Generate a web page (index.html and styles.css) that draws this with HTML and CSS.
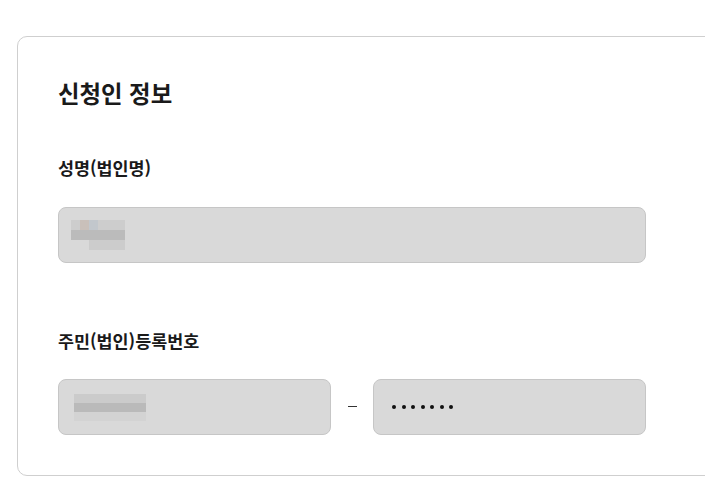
FILE: index.html
```html
<!DOCTYPE html>
<html lang="ko">
<head>
  <meta charset="UTF-8">
  <meta name="viewport" content="width=device-width, initial-scale=1.0">
  <title>신청인 정보</title>
  <link rel="stylesheet" href="styles.css">
</head>
<body>

  <div class="card">
    <h2 class="card-title">신청인 정보</h2>

    <!-- 성명 -->
    <div class="field">
      <label class="field-label">성명(법인명)</label>
      <div class="input-box">
        <div class="mosaic mosaic-name">
          <span></span><span></span><span></span><span></span><span></span><span></span>
          <span></span><span></span><span></span><span></span><span></span><span></span>
          <span></span><span></span><span></span><span></span><span></span><span></span>
        </div>
      </div>
    </div>

    <!-- 주민등록번호 -->
    <div class="field field-second">
      <label class="field-label">주민(법인)등록번호</label>
      <div class="id-row">
        <div class="input-box">
          <div class="mosaic mosaic-id">
            <span></span><span></span><span></span><span></span><span></span><span></span><span></span><span></span>
            <span></span><span></span><span></span><span></span><span></span><span></span><span></span><span></span>
            <span></span><span></span><span></span><span></span><span></span><span></span><span></span><span></span>
          </div>
        </div>
        <div class="dash"><span></span></div>
        <div class="input-box">
          <div class="dots">
            <span></span><span></span><span></span><span></span><span></span><span></span><span></span>
          </div>
        </div>
      </div>
    </div>
  </div>

</body>
</html>
```

FILE: styles.css
```css
body {
  font-family: "Noto Sans CJK KR", "Noto Sans", sans-serif;
  background-color: #ffffff;
  color: #222;
  margin: 0;
  padding: 36px 0 0 17px;
  overflow: hidden;
}

.card {
  width: 720px;
  border: 1px solid #cfcfcf;
  border-radius: 10px;
  padding: 40px 40px 40px 40px;
  box-sizing: border-box;
}

.card-title {
  margin: 0;
  font-size: 23.4px;
  line-height: 33px;
  font-weight: 700;
  color: #1a1a1a;
}

.field {
  width: 588px;
  margin-top: 46px;
}

.field-second {
  margin-top: 66px;
}

.field-label {
  display: block;
  font-size: 17.4px;
  line-height: 24px;
  font-weight: 700;
  color: #1a1a1a;
  margin-bottom: 27px;
}

.field-second .field-label {
  margin-bottom: 26px;
}

.input-box {
  height: 56px;
  background-color: #d9d9d9;
  border: 1px solid #c6c6c6;
  border-radius: 8px;
  box-sizing: border-box;
  display: flex;
  align-items: center;
  padding-left: 12px;
}

.id-row {
  display: grid;
  grid-template-columns: 1fr 42px 1fr;
}

.dash {
  display: flex;
  align-items: center;
  justify-content: center;
  padding-bottom: 1px;
}

.dash span {
  width: 9px;
  height: 1px;
  background-color: #333;
}

/* blurred placeholder values */
.mosaic {
  display: grid;
  grid-template-columns: repeat(6, 9px);
  grid-auto-rows: 10px;
}

.mosaic span {
  background-color: #cdcdcd;
}

.mosaic-name span:nth-child(n+7):nth-child(-n+12) {
  background-color: #bbbbbb;
}

.mosaic-name span:nth-child(2) { background-color: #c9c0ba; }
.mosaic-name span:nth-child(3) { background-color: #c2c7cc; }
.mosaic-name span:nth-child(8) { background-color: #b5aea9; }
.mosaic-name span:nth-child(9) { background-color: #b1b6bc; }
.mosaic-name span:nth-child(13),
.mosaic-name span:nth-child(14) { background-color: #d9d9d9; }
.mosaic-name span:nth-child(n+15) { background-color: #cccccc; }

.mosaic-id {
  grid-template-columns: repeat(8, 9px);
  grid-auto-rows: 9px;
  margin-left: 3px;
}

.mosaic-id span:nth-child(-n+8) { background-color: #cbcbcb; }

.mosaic-id span:nth-child(n+9):nth-child(-n+16) {
  background-color: #bababa;
}

.mosaic-id span:nth-child(11) { background-color: #a8a4a2; }
.mosaic-id span:nth-child(13) { background-color: #bec3c8; }
.mosaic-id span:nth-child(14) { background-color: #aaa6a4; }
.mosaic-id span:nth-child(n+17) { background-color: #d3d3d3; }

.dots {
  display: flex;
  gap: 5.5px;
  margin-left: 6px;
}

.dots span {
  width: 4px;
  height: 4px;
  border-radius: 50%;
  background-color: #111;
}
```
